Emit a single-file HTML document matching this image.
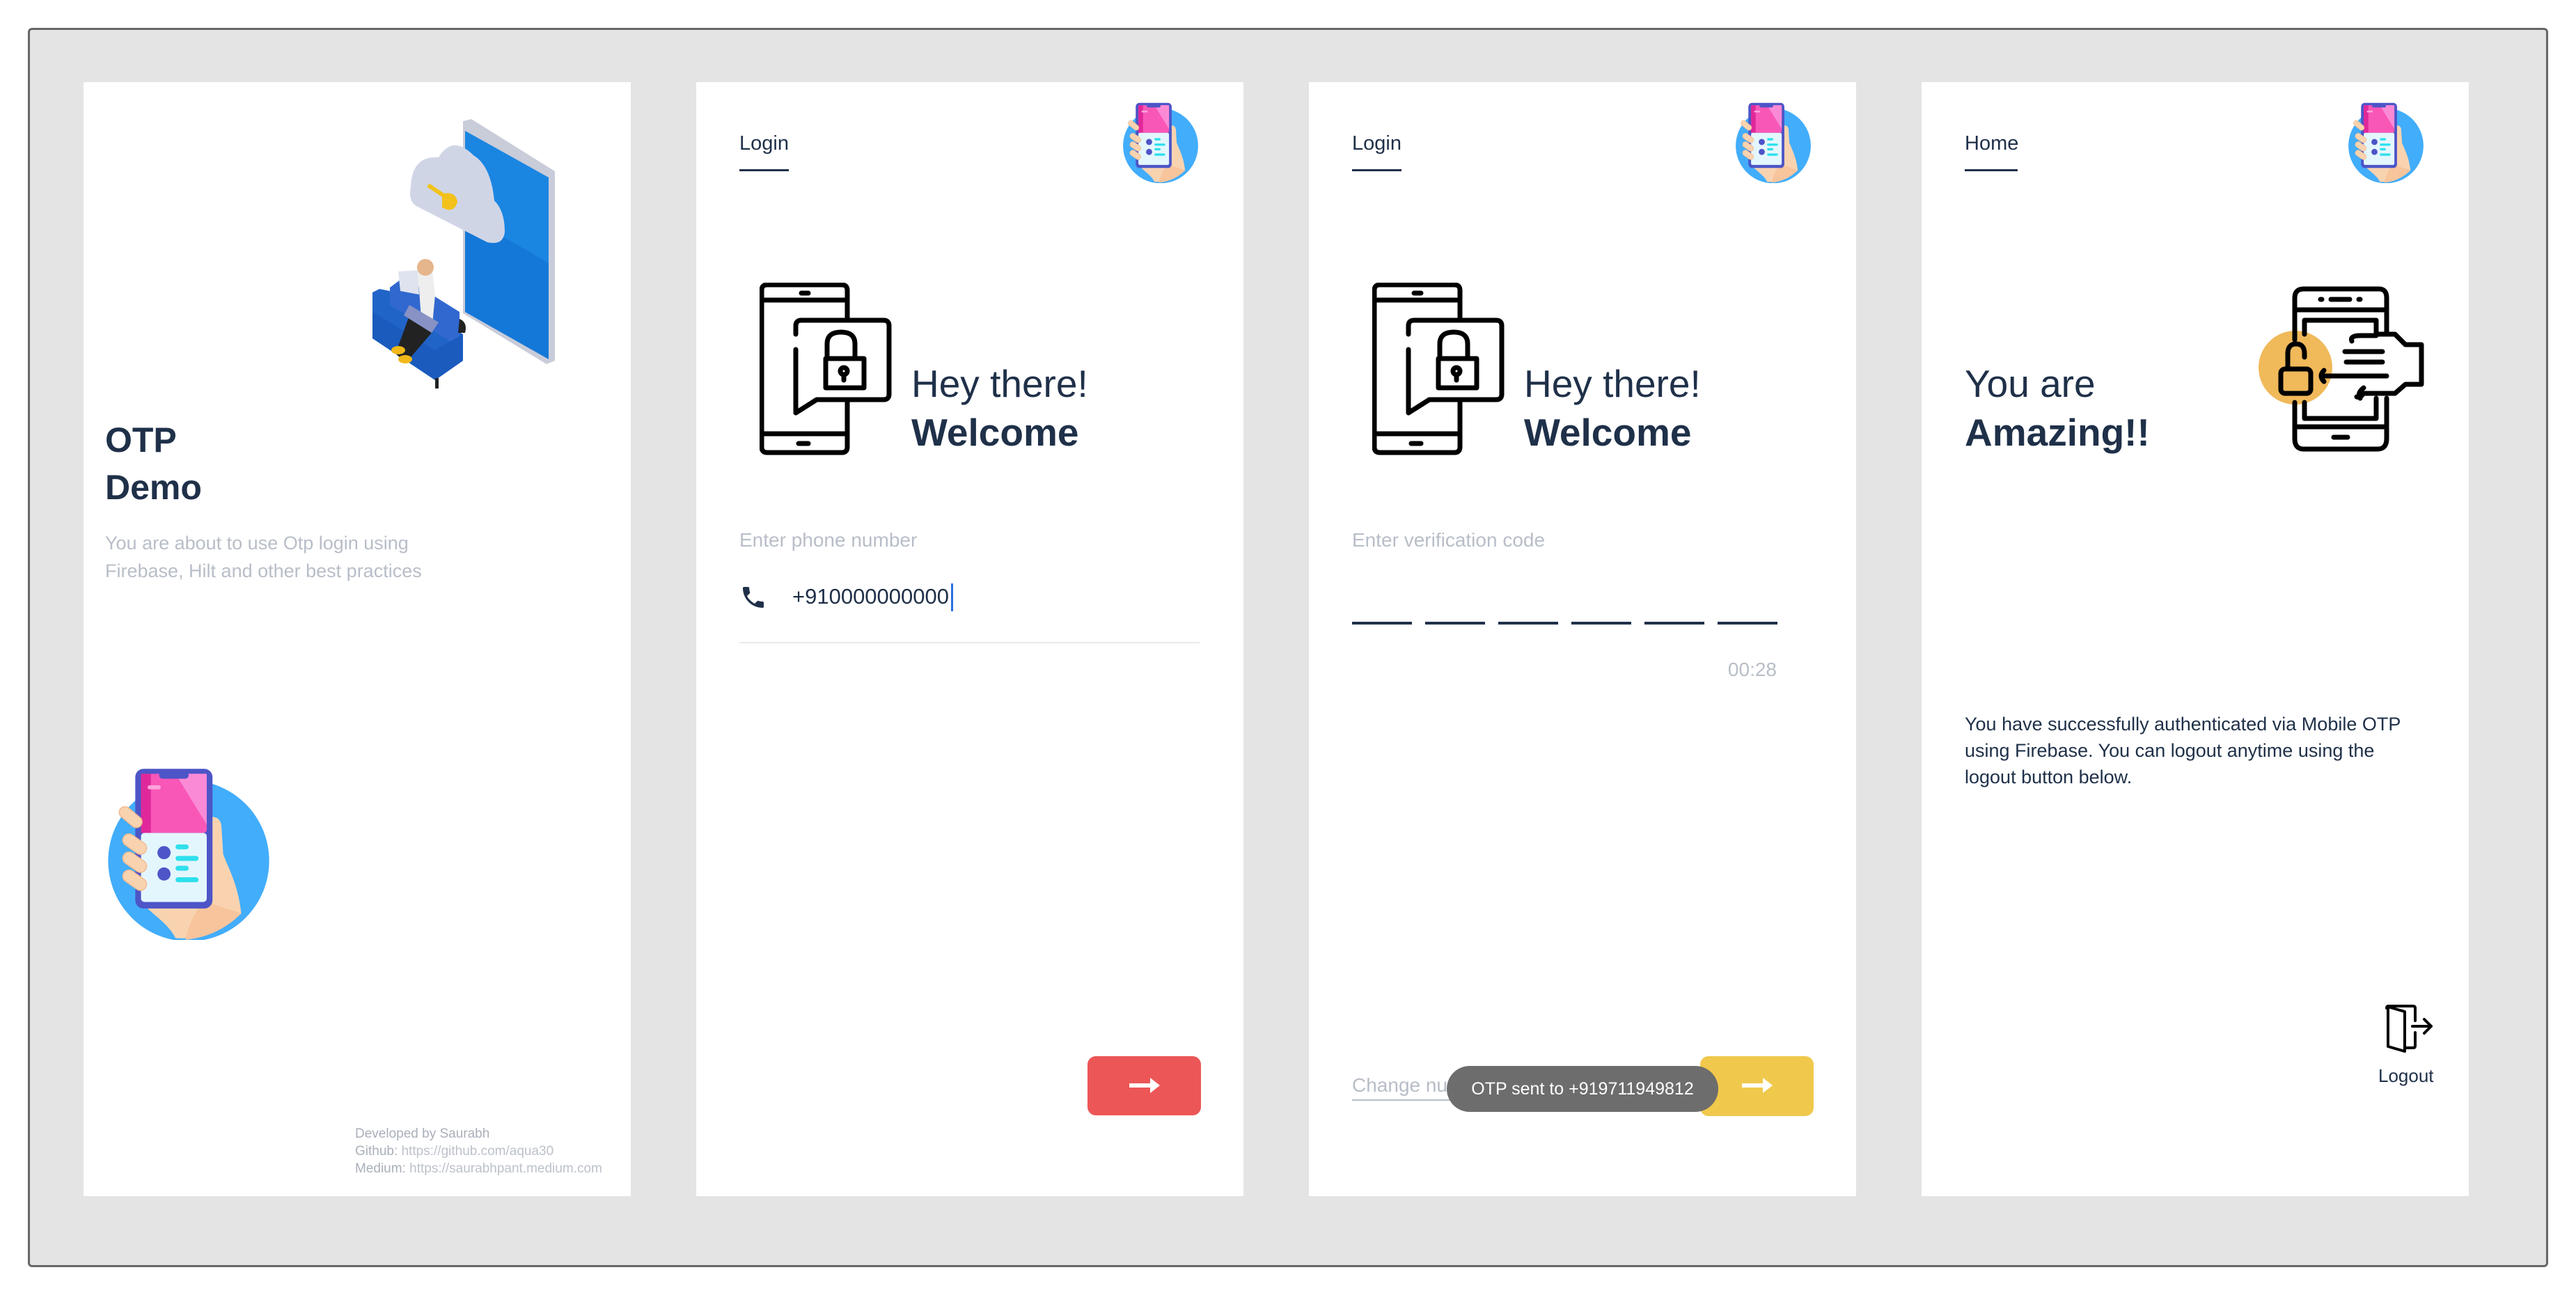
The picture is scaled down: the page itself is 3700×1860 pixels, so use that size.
<!DOCTYPE html>
<html><head><meta charset="utf-8"><style>
*{margin:0;padding:0;box-sizing:border-box}
body{width:3700px;height:1860px;background:#fff;position:relative;overflow:hidden;font-family:"Liberation Sans",sans-serif;color:#1f3049}
.frame{position:absolute;left:40px;top:40px;width:3620px;height:1780px;background:#e4e4e4;border:3px solid #666;border-radius:6px}
.panel{position:absolute;top:118px;width:786px;height:1600px;background:#fff}
.a{position:absolute;white-space:nowrap}
.tab{font-size:29px;left:62px;top:72px}
.tabline{position:absolute;left:62px;top:125px;height:3px;background:#1f3049}
.hey{font-size:55px;line-height:70px}
.lbl{font-size:28px;color:#b8bec8}
</style></head><body>
<div class="frame"></div>

<svg width="0" height="0" style="position:absolute">
<defs>
<g id="hand">
<circle cx="50" cy="56" r="49" fill="#42adfb"/>
<path d="M60 30 C66 28 70 30 70 36 L71 52 C74 60 80 70 82 88 C70 100 55 104 42 103 C38 95 30 90 24 84 L25 40 Z" fill="#f9d3b0"/>
<path d="M60 80 C70 85 78 86 82 88 C72 98 60 103 48 104 C50 95 54 86 60 80Z" fill="#f7c49c"/>
<rect x="17.5" y="0" width="47" height="85" rx="5" fill="#4d55c7"/>
<rect x="21" y="3" width="40" height="36" rx="2" fill="#f857b8"/>
<path d="M42 3 L61 3 L61 34 Z" fill="#fb8ad6"/>
<rect x="21" y="3" width="6" height="36" fill="#e0289a"/>
<rect x="21" y="39" width="40" height="42" rx="2" fill="#e4f6fd"/>
<rect x="32" y="2" width="18" height="4" rx="2" fill="#4d55c7"/>
<rect x="25" y="10" width="8" height="2.5" rx="1.2" fill="#fda3dc"/>
<circle cx="35" cy="51" r="4" fill="#4d55c7"/><circle cx="35" cy="64" r="4" fill="#4d55c7"/>
<rect x="42" y="46" width="8" height="3" rx="1.5" fill="#2ee0ec"/><rect x="42" y="53" width="14" height="3" rx="1.5" fill="#2ee0ec"/>
<rect x="42" y="59" width="8" height="3" rx="1.5" fill="#2ee0ec"/><rect x="42" y="66" width="14" height="3" rx="1.5" fill="#2ee0ec"/>
<g fill="#f9d3b0" stroke="#f2b98f" stroke-width="0.6"><rect x="7" y="26" width="16" height="7" rx="3.5" transform="rotate(40 15 29)"/><rect x="9" y="42" width="16" height="7.5" rx="3.7" transform="rotate(35 17 46)"/><rect x="9" y="53" width="16" height="7.5" rx="3.7" transform="rotate(35 17 57)"/><rect x="9" y="64" width="16" height="7.5" rx="3.7" transform="rotate(35 17 68)"/></g>
</g>
<g id="lockphone" fill="none" stroke="#000" stroke-width="7" stroke-linecap="round" stroke-linejoin="round">
<path d="M126 54 V11 Q126 3 118 3 H11 Q3 3 3 11 V236 Q3 244 11 244 H118 Q126 244 126 236 V168"/>
<line x1="3" y1="25" x2="126" y2="25"/><line x1="3" y1="217" x2="126" y2="217"/>
<line x1="60" y1="15" x2="70" y2="15"/><line x1="56" y1="231" x2="70" y2="231"/>
<path d="M52 74 V62 Q52 54 60 54 H178 Q186 54 186 62 V160 Q186 168 178 168 H82 L52 187 V96"/>
<path d="M97 109 V88 Q97 71 117 71 Q137 71 137 88 V109"/>
<rect x="95" y="109" width="55" height="42"/>
<circle cx="121" cy="127" r="5"/><line x1="121" y1="132" x2="121" y2="140"/>
</g>
</defs>
</svg>

<!-- PANEL 1 -->
<div class="panel" style="left:120px">
<svg class="a" style="left:400px;top:40px" width="300" height="400" viewBox="400 40 300 400">
<polygon points="545,56 557,53 677,128 677,400 665,405 545,332" fill="#c9ccd9"/>
<polygon points="548,70 668,137 668,398 548,330" fill="#1478d8"/>
<polygon points="548,70 668,137 668,260 548,190" fill="#1a86e2"/>
<path d="M470 150 Q472 105 510 108 Q530 75 560 105 Q585 120 590 170 Q605 185 605 215 Q603 235 580 230 L478 178 Q466 170 470 150Z" fill="#d0d5e6"/>
<path d="M495 148 L525 168 M518 163 Q532 160 534 172 Q530 185 518 178Z" stroke="#f2c21a" stroke-width="6" fill="#f2c21a"/>
<polygon points="415,302 425,297 440,300 545,362 545,400 505,428 415,368" fill="#2164c7"/>
<polygon points="440,295 460,280 540,330 540,380 440,320" fill="#3168d0"/>
<polygon points="415,330 505,385 545,362 545,400 505,428 415,368" fill="#1a5bbd"/>
<rect x="505" y="425" width="5" height="20" fill="#222"/>
<path d="M480 270 L500 262 L505 305 L500 360 L470 385 L460 380 L485 340Z" fill="#eee"/>
<circle cx="491" cy="266" r="12" fill="#e5b58c"/>
<path d="M470 330 L500 360 L470 395 L460 400 L448 390Z" fill="#222"/>
<ellipse cx="452" cy="385" rx="10" ry="6" fill="#f2b81a"/><ellipse cx="462" cy="398" rx="10" ry="6" fill="#f2b81a"/>
<polygon points="468,320 510,345 500,360 460,335" fill="#8892c4"/>
<path d="M452 272 L480 270 L482 305 L455 300Z" fill="#dfe3ef"/>
<path d="M540 340 Q552 345 548 360 L538 360Z" fill="#222"/>
</svg>
<div class="a" style="left:31px;top:480px;font-size:50px;font-weight:bold;line-height:68px">OTP<br>Demo</div>
<div class="a lbl" style="left:31px;top:642px;font-size:27px;line-height:40px">You are about to use Otp login using<br>Firebase, Hilt and other best practices</div>
<svg class="a" style="left:33px;top:986px" width="236" height="246" viewBox="0 0 100 104"><use href="#hand"/></svg>
<div class="a" style="left:390px;top:1498px;font-size:19px;line-height:25px;color:#bcc1ca"><span style="color:#a9afb9">Developed by Saurabh</span><br><span style="color:#a9afb9">Github:</span> https://github.com/aqua30<br><span style="color:#a9afb9">Medium:</span> https://saurabhpant.medium.com</div>
</div>

<!-- PANEL 2 -->
<div class="panel" style="left:1000px">
<div class="a tab">Login</div><div class="tabline" style="width:71px"></div>
<svg class="a" style="left:612px;top:29px" width="110" height="116" viewBox="0 0 100 104"><use href="#hand"/></svg>
<svg class="a" style="left:91px;top:288px" width="190" height="250" viewBox="0 0 190 250"><use href="#lockphone"/></svg>
<div class="a hey" style="left:309px;top:398px">Hey there!<br><b>Welcome</b></div>
<div class="a lbl" style="left:62px;top:642px">Enter phone number</div>
<svg class="a" style="left:62px;top:720px" width="40" height="40" viewBox="0 0 24 24"><path fill="#1f3049" d="M6.6 10.8c1.4 2.8 3.8 5.1 6.6 6.6l2.2-2.2c.3-.3.7-.4 1-.2 1.1.4 2.3.6 3.6.6.6 0 1 .4 1 1V20c0 .6-.4 1-1 1C10.6 21 3 13.4 3 4c0-.6.4-1 1-1h3.5c.6 0 1 .4 1 1 0 1.3.2 2.5.6 3.6.1.3 0 .7-.2 1z"/></svg>
<div class="a" style="left:138px;top:721px;font-size:31px">+910000000000</div>
<div class="a" style="left:366px;top:720px;width:3px;height:40px;background:#2b6fe0"></div>
<div class="a" style="left:62px;top:804px;width:661px;height:2px;background:#e8eaee"></div>
<div class="a" style="left:562px;top:1399px;width:163px;height:85px;background:#ec5657;border-radius:12px"></div>
<svg class="a" style="left:622px;top:1428px" width="44" height="26" viewBox="0 0 44 26"><path d="M0 10h30V2l14 11-14 11v-8H0z" fill="#fff"/></svg>
</div>

<!-- PANEL 3 -->
<div class="panel" style="left:1880px">
<div class="a tab">Login</div><div class="tabline" style="width:71px"></div>
<svg class="a" style="left:612px;top:29px" width="110" height="116" viewBox="0 0 100 104"><use href="#hand"/></svg>
<svg class="a" style="left:91px;top:288px" width="190" height="250" viewBox="0 0 190 250"><use href="#lockphone"/></svg>
<div class="a hey" style="left:309px;top:398px">Hey there!<br><b>Welcome</b></div>
<div class="a lbl" style="left:62px;top:642px">Enter verification code</div>
<div class="a" style="left:62px;top:775px;width:86px;height:4px;background:#1f3049"></div>
<div class="a" style="left:167px;top:775px;width:86px;height:4px;background:#1f3049"></div>
<div class="a" style="left:272px;top:775px;width:86px;height:4px;background:#1f3049"></div>
<div class="a" style="left:377px;top:775px;width:86px;height:4px;background:#1f3049"></div>
<div class="a" style="left:482px;top:775px;width:86px;height:4px;background:#1f3049"></div>
<div class="a" style="left:587px;top:775px;width:86px;height:4px;background:#1f3049"></div>
<div class="a lbl" style="right:114px;top:828px">00:28</div>
<div class="a lbl" style="left:62px;top:1425px">Change number</div>
<div class="a" style="left:62px;top:1461px;width:216px;height:2px;background:#b8bec8"></div>
<div class="a" style="left:562px;top:1399px;width:163px;height:86px;background:#f0c84c;border-radius:12px"></div>
<svg class="a" style="left:622px;top:1428px" width="44" height="26" viewBox="0 0 44 26"><path d="M0 10h30V2l14 11-14 11v-8H0z" fill="#fff"/></svg>
<div class="a" style="left:198px;top:1413px;width:390px;height:66px;background:#6d6d6d;border-radius:33px;color:#fff;font-size:25px;line-height:66px;text-align:center">OTP sent to +919711949812</div>
</div>

<!-- PANEL 4 -->
<div class="panel" style="left:2760px">
<div class="a tab">Home</div><div class="tabline" style="width:76px"></div>
<svg class="a" style="left:612px;top:29px" width="110" height="116" viewBox="0 0 100 104"><use href="#hand"/></svg>
<div class="a hey" style="left:62px;top:398px">You are<br><b>Amazing!!</b></div>
<svg class="a" style="left:440px;top:262px" width="320" height="300" viewBox="0 0 320 300">
<circle cx="97" cy="148" r="53" fill="#f0b95a"/>
<g fill="none" stroke="#000" stroke-width="7" stroke-linejoin="round" stroke-linecap="round">
<path d="M96 108 V48 Q96 35 109 35 H217 Q228 35 228 48 V100 M228 192 V250 Q228 265 215 265 H109 Q96 265 96 250 V198"/>
<line x1="96" y1="65" x2="228" y2="65"/><line x1="96" y1="233" x2="228" y2="233"/>
<path d="M110 100 V80 H213 V100 M213 192 V221 H110 V198"/>
<line x1="133" y1="50" x2="135" y2="50"/><line x1="148" y1="50" x2="175" y2="50"/><line x1="188" y1="50" x2="190" y2="50"/>
<line x1="152" y1="248" x2="172" y2="248"/>
<rect x="76" y="150" width="43" height="35" rx="6"/>
<path d="M86 150 V128 Q86 114 98 114 Q110 114 110 128 V133"/>
<path d="M213 100 H240 L255 115 H278 V172 H255 L240 185 H195 Q190 192 185 190 M135 160 H228 M170 140 H222 M168 125 H222 M178 110 Q175 102 190 102 H213 M138 168 Q130 160 138 152 M195 177 Q185 185 190 192"/>
</g>
</svg>
<div class="a" style="left:62px;top:903px;font-size:27px;line-height:38px">You have successfully authenticated via Mobile OTP<br>using Firebase. You can logout anytime using the<br>logout button below.</div>
<svg class="a" style="left:664px;top:1324px" width="76" height="72" viewBox="0 0 76 72">
<g fill="none" stroke="#000" stroke-width="4" stroke-linejoin="round" stroke-linecap="round">
<path d="M4 6 Q4 3 7 3 H42 Q45 3 45 6 V24 M45 41 V60 Q45 63 42 63 H32"/>
<path d="M6 4 L30 11 V68 L6 61 Z"/>
<path d="M41 32 H68 M58 22 L68 32 L58 42"/>
</g></svg>
<div class="a" style="left:656px;top:1412px;font-size:26px">Logout</div>
</div>
</body></html>
